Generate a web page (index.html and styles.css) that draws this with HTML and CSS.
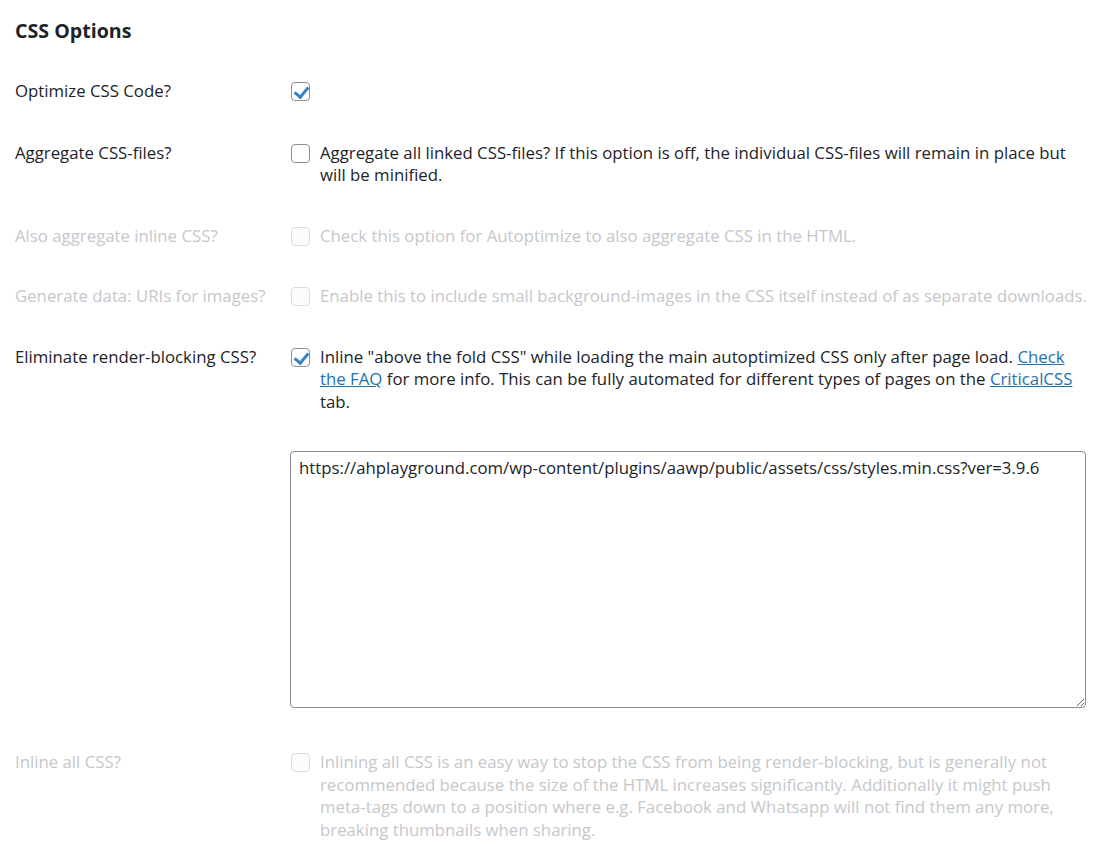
FILE: index.html
```html
<!DOCTYPE html>
<html lang="en">
<head>
    <meta charset="UTF-8">
    <title>CSS Options</title>
    <link rel="stylesheet" href="styles.css">
</head>
<body>
    <div class="wrap">
        <h2>CSS Options</h2>
        <div class="form-table">
            <div class="row first">
                <div class="label">Optimize CSS Code?</div>
                <div class="field">
                    <label class="check"><input type="checkbox" checked></label>
                </div>
            </div>
            <div class="row">
                <div class="label">Aggregate CSS-files?</div>
                <div class="field">
                    <label class="check"><input type="checkbox"><span>Aggregate all linked CSS-files? If this option is off, the individual CSS-files will remain in place but will be minified.</span></label>
                </div>
            </div>
            <div class="row disabled">
                <div class="label">Also aggregate inline CSS?</div>
                <div class="field">
                    <label class="check"><input type="checkbox" disabled><span>Check this option for Autoptimize to also aggregate CSS in the HTML.</span></label>
                </div>
            </div>
            <div class="row disabled">
                <div class="label">Generate data: URIs for images?</div>
                <div class="field">
                    <label class="check"><input type="checkbox" disabled><span>Enable this to include small background-images in the CSS itself instead of as separate downloads.</span></label>
                </div>
            </div>
            <div class="row">
                <div class="label">Eliminate render-blocking CSS?</div>
                <div class="field">
                    <label class="check"><input type="checkbox" checked><span>Inline "above the fold CSS" while loading the main autoptimized CSS only after page load. <a href="#">Check the FAQ</a> for more info. This can be fully automated for different types of pages on the <a href="#">CriticalCSS</a> tab.</span></label>
                </div>
            </div>
            <div class="row">
                <div class="label"></div>
                <div class="field">
                    <textarea class="css-box" rows="10">https://ahplayground.com/wp-content/plugins/aawp/public/assets/css/styles.min.css?ver=3.9.6</textarea>
                </div>
            </div>
            <div class="row disabled">
                <div class="label">Inline all CSS?</div>
                <div class="field">
                    <label class="check"><input type="checkbox" disabled><span>Inlining all CSS is an easy way to stop the CSS from being render-blocking, but is generally not recommended because the size of the HTML increases significantly. Additionally it might push meta-tags down to a position where e.g. Facebook and Whatsapp will not find them any more, breaking thumbnails when sharing.</span></label>
                </div>
            </div>
        </div>
    </div>
</body>
</html>
```

FILE: styles.css
```css
* {
    box-sizing: border-box;
}

body {
    margin: 0;
    background: #fff;
    color: #1d2327;
    font-family: 'Open Sans', 'Noto Sans', sans-serif;
    font-size: 16.8px;
    line-height: 22.5px;
}

.wrap {
    width: 1092px;
    padding: 0 0 0 15px;
}

h2 {
    margin: 0;
    padding-top: 19px;
    font-size: 19.6px;
    line-height: 24px;
    font-weight: 700;
}

.form-table {
    margin-top: 18px;
}

.row {
    display: grid;
    grid-template-columns: 275px 1fr;
    padding: 19px 0;
}

.row.first {
    padding-bottom: 20px;
}

.check {
    display: flex;
    align-items: flex-start;
    gap: 10px;
}

.check input {
    appearance: none;
    flex: none;
    width: 19px;
    height: 19px;
    margin: 2px 0 0 1px;
    border: 1px solid #8c8f94;
    border-radius: 4px;
    background: #fff;
    position: relative;
}

.check input:checked::after {
    content: "";
    position: absolute;
    left: 5px;
    top: 1px;
    width: 6px;
    height: 11px;
    border: solid #3582c4;
    border-width: 0 3px 3px 0;
    transform: rotate(40deg);
}

a {
    color: #2271b1;
    text-decoration: underline;
}

.disabled {
    color: #c6c7ca;
}

.disabled .check input {
    border-color: #dcdcde;
    background: #fcfcfc;
}

.css-box {
    display: block;
    width: 796px;
    height: 257px;
    margin: 0 0 5px;
    padding: 5px 8px;
    border: 1px solid #8c8f94;
    border-radius: 4px;
    font-family: inherit;
    font-size: 16.8px;
    line-height: 22.5px;
    color: #1d2327;
    resize: vertical;
}
```
